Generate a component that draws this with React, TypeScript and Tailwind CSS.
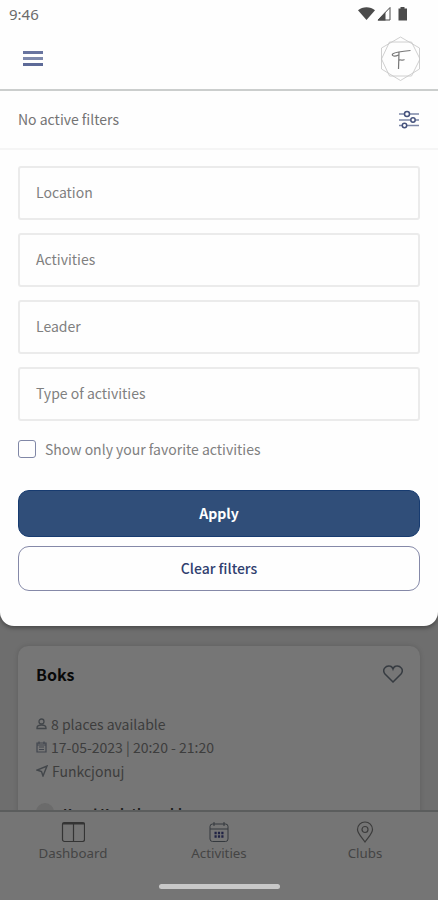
import type { ReactNode } from 'react';

const FIELDS = ['Location', 'Activities', 'Leader', 'Type of activities'];

function StatusBar() {
  return (
    <div className="flex h-[28px] items-center justify-between pl-[9px] pr-[30px]">
      <span className="font-['Noto_Sans'] text-[15px] leading-none text-[#6b6b6b]">9:46</span>
      <svg width="50" height="16" viewBox="0 0 50 16" fill="#4b4b4b">
        <path d="M0 4.2C4.6.2 12.4.2 17 4.2L8.500 14z" />
        <path d="M32 1.500v12.500H20z" fill="none" stroke="#4b4b4b" />
        <path d="M27.500 6v8.500H19.500z" />
        <path d="M42.500 1h4v1.500H49V14.500h-8.500V2.500h2z" />
      </svg>
    </div>
  );
}

function ClubLogo() {
  return (
    <svg width="40" height="46" viewBox="0 0 40 46" fill="none">
      <g stroke="#c4c4c4" strokeWidth="0.8">
        <path d="M20.500 1 39.500 12v21l-19 11.500L1.500 33V12z" />
        <path d="M9.500 6h22L40 23l-8.500 17h-22L1.500 23z" />
      </g>
      <path d="M12.500 18c3-2 12-3 18-3.500M12.500 18c-1 2 2 3 6 1M19 16.500 18.500 33M18.500 24.500c2-2 3 1 6-1" stroke="#777" strokeWidth="1.200" />
    </svg>
  );
}

function FiltersIcon() {
  return (
    <svg width="20" height="19" viewBox="0 0 20 19" fill="none" stroke="#7c86a6" strokeWidth="1.500">
      <path d="M0 4h5.500M10.500 4H20M0 10h11.500M16.500 10H20M0 15.500h3M8 15.500h12" />
      <g stroke="#45527c">
        <circle cx="8" cy="4" r="2.500" />
        <circle cx="14" cy="10" r="2.200" />
        <circle cx="5.500" cy="15.500" r="2.200" />
      </g>
    </svg>
  );
}

function Detail({ icon, children }: { icon: ReactNode; children: ReactNode }) {
  return (
    <li className="flex h-[23.500px] items-center gap-1">
      {icon}
      <span>{children}</span>
    </li>
  );
}

function FilterSheet() {
  return (
    <section className="relative z-10 flex h-[626px] flex-col rounded-b-[14px] bg-[#fefefe] shadow-[0_2px_4px_rgba(0,0,0,0.35)]">
      <StatusBar />
      <header className="flex h-[63px] items-center justify-between border-b-2 border-[#cbcecd] pl-[23px] pr-[18px]">
        <div className="flex w-5 flex-col gap-[3px] pb-px">
          <i className="h-[3px] bg-[#68749f]" />
          <i className="h-[3px] bg-[#7e89ac]" />
          <i className="h-[3px] bg-[#5d6a98]" />
        </div>
        <ClubLogo />
      </header>
      <div className="flex h-[59px] items-center justify-between border-b-2 border-[#f5f5f5] pl-[18px] pr-[19px]">
        <span className="pb-px text-[#747474]">No active filters</span>
        <FiltersIcon />
      </div>
      <form className="flex flex-col px-[18px] pt-4">
        <div className="flex flex-col gap-[13px]">
          {FIELDS.map((label) => (
            <div key={label} className="flex h-[54px] items-center rounded-[3px] border-2 border-[#ebebeb] pl-4 pb-0.5 text-[#808080]">
              {label}
            </div>
          ))}
        </div>
        <label className="mt-[19px] flex h-[18px] items-center gap-[9px] text-[#808080]">
          <span className="size-[18px] rounded-[3px] border-[1.500px] border-[#8087a6]" />
          Show only your favorite activities
        </label>
        <button type="button" className="mt-8 h-[47px] rounded-[11px] border border-[#173b70] bg-[#304e79] pb-px font-bold text-white">
          Apply
        </button>
        <button type="button" className="mt-[9px] h-[45px] rounded-[11px] border border-[#8589a8] pb-px font-medium text-[#30406f]">
          Clear filters
        </button>
      </form>
    </section>
  );
}

function ActivityCard() {
  return (
    <article className="mx-[18px] mt-5 h-[180px] rounded-t-[10px] bg-[#767676] px-[18px] pt-[15px] shadow-[0_0_5px_rgba(0,0,0,0.15)]">
      <div className="flex h-[26px] items-center justify-between">
        <h2 className="text-[16px] font-bold text-[#090909]">Boks</h2>
        <svg width="20" height="18" viewBox="0 0 20 18" fill="none" stroke="#363b41" strokeWidth="1.500" className="-mr-px">
          <path d="M10 17 2 9C-1.500 4.500 3 .5 6.500 1 8.500 1.200 9.500 2.500 10 4c.5-1.500 1.500-2.800 3.500-3C17 .5 21.500 4.500 18 9z" />
        </svg>
      </div>
      <ul className="mt-[25px] text-[#3d3d3d]">
        <Detail
          icon={
            <svg width="11" height="12" viewBox="0 0 11 12" fill="none" stroke="#42464a" strokeWidth="1.300">
              <circle cx="5.500" cy="3.500" r="2.500" />
              <path d="M1 10.500V10C1 8 3 7 5.500 7S10 8 10 10v.5z" />
            </svg>
          }
        >
          8 places available
        </Detail>
        <Detail
          icon={
            <svg width="11" height="12" viewBox="0 0 11 12" fill="none" stroke="#42464f" strokeWidth="1.200">
              <path d="M1 2h9v9H1zM1 4h9M3 .5V3M8 .5V3M3 6h5M3 8.500h5" />
            </svg>
          }
        >
          17-05-2023 | 20:20 - 21:20
        </Detail>
        <Detail
          icon={
            <svg width="12" height="12" viewBox="0 0 12 12" fill="none" stroke="#42464a" strokeWidth="1.400">
              <path d="M11 1 7 11 5.500 6.500 1 5z" />
            </svg>
          }
        >
          Funkcjonuj
        </Detail>
      </ul>
      <div className="mt-[20px] flex items-start gap-[9px] font-bold text-[#1b1b1b]">
        <i className="size-[18px] rounded-full bg-[#6b6b6b]" />
        <span className="pt-px text-[13px]">Karol Kwiatkowski</span>
      </div>
    </article>
  );
}

function Tab({ label, icon }: { label: string; icon: ReactNode }) {
  return (
    <div className="flex flex-1 flex-col items-center">
      <span className="flex h-[22px] items-center">{icon}</span>
      <span className="mt-px font-['Noto_Sans'] text-[13.300px] leading-[18px]">{label}</span>
    </div>
  );
}

function TabBar() {
  return (
    <nav className="relative flex h-[90px] shrink-0 flex-col border-t-2 border-[#5b5d5d] bg-[#757575] text-[#444]">
      <div className="flex pt-[9px]">
        <Tab
          label="Dashboard"
          icon={
            <svg width="24" height="22" viewBox="0 0 24 22" fill="none" stroke="#343434" strokeWidth="1.200">
              <rect x="1.500" y="1.500" width="22" height="19" rx="2" />
              <path d="M1.500 2.500h22" strokeWidth="2" />
              <path d="M12.500 2v18" />
            </svg>
          }
        />
        <Tab
          label="Activities"
          icon={
            <svg width="20" height="22" viewBox="0 0 20 22" fill="none" stroke="#34393e">
              <rect x="1" y="3" width="18" height="17.500" rx="2.500" />
              <path d="M1 8h18M5 1v4M15 1v4" />
              <path d="M5.500 12h2.200m1.200 0h2.200m1.200 0h2.200M5.500 15.500h2.200m1.200 0h2.200m1.200 0h2.200" stroke="#202344" strokeWidth="2.300" />
            </svg>
          }
        />
        <Tab
          label="Clubs"
          icon={
            <svg width="18" height="22" viewBox="0 0 18 22" fill="none" stroke="#3c3c3c" strokeWidth="1.200">
              <path d="M9 21C6 16.500 1.500 12.500 1.500 8.500a7.500 7.500 0 0 1 15 0C16.500 12.500 12 16.500 9 21z" />
              <circle cx="9" cy="8.500" r="3" />
            </svg>
          }
        />
      </div>
      <i className="mx-auto mt-[22px] h-[5px] w-[121px] rounded-full bg-[#c8c8c8]" />
    </nav>
  );
}

export default function App() {
  return (
    <main className="flex h-[900px] w-full flex-col overflow-hidden bg-[#6e6e6e] font-['Noto_Sans_CJK_SC','Noto_Sans',sans-serif] text-[14px] leading-5">
      <FilterSheet />
      <div className="h-[184px] shrink-0 overflow-hidden">
        <ActivityCard />
      </div>
      <TabBar />
    </main>
  );
}
